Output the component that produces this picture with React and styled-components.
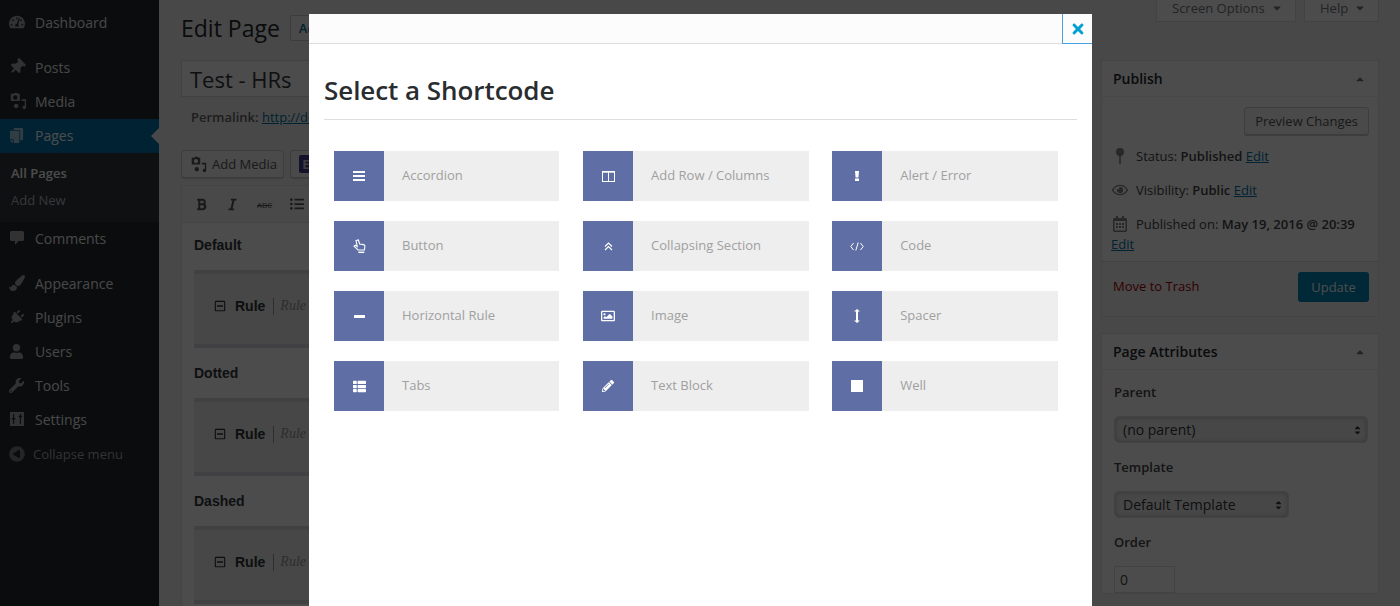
import React from 'react'
import styled, { createGlobalStyle } from 'styled-components'
import {
  FaRegImage,
  FaThList,
  FaPencilAlt,
  FaTimes,
  FaTachometerAlt,
  FaThumbtack,
  FaCopy,
  FaPaintBrush,
  FaPlug,
  FaUser,
  FaWrench,
  FaPlayCircle,
  FaBold,
  FaItalic,
  FaListUl,
  FaCaretDown,
  FaCaretUp,
  FaRegEye,
  FaRegCalendarAlt,
  FaRegMinusSquare,
} from 'react-icons/fa'

const GlobalStyle = createGlobalStyle`
  html, body {
    margin: 0;
    padding: 0;
    height: 606px;
    overflow: hidden;
    background: #f1f1f1;
  }
  * {
    box-sizing: border-box;
  }
`

const MediaGlyph = ({ size = 16 }) => (
  <svg width={size} height={size} viewBox='0 0 20 20' fill='currentColor'>
    <path d='M2 2h3l1-1h3l1 1h2v8H2V2zm5 1.5a2.5 2.5 0 1 0 0 5 2.5 2.5 0 0 0 0-5z' />
    <path d='M14 8h5v9a2 2 0 1 1-1.5-1.9V10H14V8z' />
    <path d='M8 13a2.5 2.5 0 1 1-2 4 2.5 2.5 0 0 1 2-4z' />
  </svg>
)

const CommentGlyph = () => (
  <svg width='16' height='16' viewBox='0 0 16 16' fill='currentColor'>
    <path d='M2.5 1h11A1.5 1.5 0 0 1 15 2.500v7a1.500 1.500 0 0 1-1.500 1.500H9.500L6 15v-4H2.500A1.500 1.500 0 0 1 1 9.500v-7A1.500 1.500 0 0 1 2.500 1z' />
  </svg>
)

const SettingsGlyph = () => (
  <svg width='16' height='16' viewBox='0 0 16 16'>
    <path
      fill='currentColor'
      fillRule='evenodd'
      d='M1 1h14v14H1V1zm3 2v4H2.800v1.500H4V13h1.200V8.500h1.200V7H5.200V3H4zm6.800 0v1.800H9.600v1.500h1.200V13H12V6.300h1.200V4.800H12V3h-1.200z'
    />
  </svg>
)

const PinGlyph = () => (
  <svg width='16' height='18' viewBox='0 0 16 18' fill='currentColor'>
    <circle cx='8' cy='5' r='4' />
    <rect x='7.200' y='8' width='1.600' height='9' />
  </svg>
)

const BarsGlyph = () => (
  <svg width='12' height='10' viewBox='0 0 12 10' fill='currentColor'>
    <rect width='12' height='2' />
    <rect y='4' width='12' height='2' />
    <rect y='8' width='12' height='2' />
  </svg>
)

const ColumnsGlyph = () => (
  <svg width='13' height='11' viewBox='0 0 13 11' fill='none' stroke='currentColor'>
    <rect x='0.500' y='0.500' width='12' height='10' />
    <path d='M6.500 0.500v10M0.500 1.200h12' />
  </svg>
)

const AlertGlyph = () => (
  <svg width='4' height='10' viewBox='0 0 4 10' fill='currentColor'>
    <path d='M0 0h4L3.400 6.500H0.600L0 0z' />
    <rect y='7.500' width='4' height='2.500' />
  </svg>
)

const HandGlyph = () => (
  <svg width='13' height='15' viewBox='0 0 13 15' fill='none' stroke='currentColor' strokeWidth='1.100'>
    <path d='M3 1.500L5.400 1l1.200 4 3.900.600c1 .2 1.500.9 1.400 1.900l-.500 3.500H5L1 7.200l1.500-1 1.800 1.300L3 1.500z' />
    <path d='M5.300 13.300h6' strokeWidth='1.500' />
  </svg>
)

const ChevronsGlyph = () => (
  <svg width='9' height='9' viewBox='0 0 9 9' fill='none' stroke='currentColor' strokeWidth='1.200'>
    <path d='M1 4.500l3.500-3.500L8 4.500M1 8l3.500-3.500L8 8' />
  </svg>
)

const CodeGlyph = () => (
  <svg width='14' height='9' viewBox='0 0 14 9' fill='none' stroke='currentColor'>
    <path d='M3.500 1L0.800 4.500 3.500 8M10.500 1l2.700 3.500L10.500 8M8.200 0.500L5.800 8.500' />
  </svg>
)

const MinusGlyph = () => (
  <svg width='11' height='3' viewBox='0 0 11 3' fill='currentColor'>
    <rect width='11' height='3' rx='0.500' />
  </svg>
)

const SpacerGlyph = () => (
  <svg width='6' height='14' viewBox='0 0 6 14' fill='currentColor'>
    <path d='M3 0l3 2.500H4v9h2L3 14 0 11.500h2v-9H0L3 0z' />
  </svg>
)

const SquareGlyph = () => (
  <svg width='12' height='12' viewBox='0 0 12 12' fill='currentColor'>
    <rect width='12' height='12' />
  </svg>
)

const menuTop = [
  { label: 'Posts', icon: <FaThumbtack size={16} style={{ transform: 'rotate(45deg)' }} /> },
  { label: 'Media', icon: <MediaGlyph size={18} /> },
]

const menuBottom = [
  { label: 'Appearance', icon: <FaPaintBrush size={16} /> },
  { label: 'Plugins', icon: <FaPlug size={15} style={{ transform: 'rotate(45deg)' }} /> },
  { label: 'Users', icon: <FaUser size={15} /> },
  { label: 'Tools', icon: <FaWrench size={15} /> },
  { label: 'Settings', icon: <SettingsGlyph /> },
]

const shortcodes = [
  { label: 'Accordion', icon: <BarsGlyph /> },
  { label: 'Add Row / Columns', icon: <ColumnsGlyph /> },
  { label: 'Alert / Error', icon: <AlertGlyph /> },
  { label: 'Button', icon: <HandGlyph /> },
  { label: 'Collapsing Section', icon: <ChevronsGlyph /> },
  { label: 'Code', icon: <CodeGlyph /> },
  { label: 'Horizontal Rule', icon: <MinusGlyph /> },
  { label: 'Image', icon: <FaRegImage size={14} /> },
  { label: 'Spacer', icon: <SpacerGlyph /> },
  { label: 'Tabs', icon: <FaThList size={13} /> },
  { label: 'Text Block', icon: <FaPencilAlt size={12} /> },
  { label: 'Well', icon: <SquareGlyph /> },
]

const ruleGroups = ['Default', 'Dotted', 'Dashed']

const App = () => {
  return (
    <Page>
      <GlobalStyle />
      <Sidebar>
        <MenuItem>
          <MenuIcon><FaTachometerAlt size={16} /></MenuIcon>
          Dashboard
        </MenuItem>
        <Separator />
        {menuTop.map((m) => (
          <MenuItem key={m.label}>
            <MenuIcon>{m.icon}</MenuIcon>
            {m.label}
          </MenuItem>
        ))}
        <MenuItem $active>
          <MenuIcon><FaCopy size={15} style={{ transform: 'rotate(180deg)' }} /></MenuIcon>
          Pages
        </MenuItem>
        <SubMenu>
          <SubItem $current>All Pages</SubItem>
          <SubItem>Add New</SubItem>
        </SubMenu>
        <MenuItem>
          <MenuIcon><CommentGlyph /></MenuIcon>
          Comments
        </MenuItem>
        <Separator />
        {menuBottom.map((m) => (
          <MenuItem key={m.label}>
            <MenuIcon>{m.icon}</MenuIcon>
            {m.label}
          </MenuItem>
        ))}
        <CollapseItem>
          <MenuIcon><FaPlayCircle size={16} style={{ transform: 'scaleX(-1)' }} /></MenuIcon>
          Collapse menu
        </CollapseItem>
      </Sidebar>

      <Content>
        <MainColumn>
          <HeadingRow>
            <Heading>Edit Page</Heading>
            <AddNew>Add New</AddNew>
          </HeadingRow>
          <TitleInput>Test - HRs</TitleInput>
          <Permalink>
            <strong>Permalink:</strong> <a>http://dev.example.com/test-hrs/</a>
          </Permalink>
          <MediaRow>
            <WpButton><MediaGlyph size={17} /> Add Media</WpButton>
            <WpButton><BuilderBadge>E</BuilderBadge> Editor</WpButton>
          </MediaRow>
          <Editor>
            <Toolbar>
              <FaBold size={13} />
              <FaItalic size={13} />
              <Abc>ABC</Abc>
              <FaListUl size={14} />
            </Toolbar>
            <EditorBody>
              {ruleGroups.map((g) => (
                <React.Fragment key={g}>
                  <GroupTitle>{g}</GroupTitle>
                  <RuleBlock>
                    <FaRegMinusSquare size={12} />
                    <RuleName>Rule</RuleName>
                    <RuleHint>Rule</RuleHint>
                  </RuleBlock>
                </React.Fragment>
              ))}
            </EditorBody>
          </Editor>
        </MainColumn>

        <SideColumn>
          <ScreenTabs>
            <ScreenTab $width={140}>Screen Options <FaCaretDown size={12} /></ScreenTab>
            <ScreenTab $width={75}>Help <FaCaretDown size={12} /></ScreenTab>
          </ScreenTabs>

          <Box>
            <BoxHead>Publish <FaCaretUp size={12} /></BoxHead>
            <PreviewRow>
              <WpButton>Preview Changes</WpButton>
            </PreviewRow>
            <PubRow>
              <PinGlyph />
              <span>Status: <strong>Published</strong> <a>Edit</a></span>
            </PubRow>
            <PubRow>
              <FaRegEye size={16} />
              <span>Visibility: <strong>Public</strong> <a>Edit</a></span>
            </PubRow>
            <PubRow>
              <FaRegCalendarAlt size={16} />
              <span>Published on: <strong>May 19, 2016 @ 20:39</strong></span>
            </PubRow>
            <PubDateEdit><a>Edit</a></PubDateEdit>
            <BoxFooter>
              <Trash>Move to Trash</Trash>
              <Update>Update</Update>
            </BoxFooter>
          </Box>

          <Box>
            <BoxHead>Page Attributes <FaCaretUp size={12} /></BoxHead>
            <AttrBody>
              <AttrLabel>Parent</AttrLabel>
              <FakeSelect $width={254}>(no parent)<SelectArrows><FaCaretUp size={9} /><FaCaretDown size={9} /></SelectArrows></FakeSelect>
              <AttrLabel>Template</AttrLabel>
              <FakeSelect $width={175}>Default Template<SelectArrows><FaCaretUp size={9} /><FaCaretDown size={9} /></SelectArrows></FakeSelect>
              <AttrLabel>Order</AttrLabel>
              <OrderInput>0</OrderInput>
            </AttrBody>
          </Box>
        </SideColumn>
      </Content>

      <Backdrop />

      <Modal>
        <ModalBar>
          <CloseButton><FaTimes size={16} /></CloseButton>
        </ModalBar>
        <ModalBody>
          <ModalTitle>Select a Shortcode</ModalTitle>
          <ShortcodeGrid>
            {shortcodes.map((s) => (
              <Shortcode key={s.label}>
                <ShortcodeIcon>{s.icon}</ShortcodeIcon>
                <ShortcodeLabel>{s.label}</ShortcodeLabel>
              </Shortcode>
            ))}
          </ShortcodeGrid>
        </ModalBody>
      </Modal>
    </Page>
  )
}

const Page = styled.div`
  position: relative;
  width: 1400px;
  height: 606px;
  overflow: hidden;
  display: flex;
  font-family: 'Open Sans', sans-serif;
  font-size: 13px;
  color: #444;
  background: #f1f1f1;

  a {
    color: #0073aa;
    text-decoration: underline;
  }
`

const Sidebar = styled.nav`
  width: 159px;
  flex-shrink: 0;
  background: #23282d;
  padding-top: 6px;
  color: #eee;
  font-size: 14px;
`

const MenuItem = styled.div`
  position: relative;
  height: 34px;
  padding-bottom: 2px;
  display: flex;
  align-items: center;
  color: ${(p) => (p.$active ? '#fff' : '#eee')};
  background: ${(p) => (p.$active ? '#0073aa' : 'transparent')};

  ${(p) =>
    p.$active &&
    `
    &::after {
      content: '';
      position: absolute;
      right: 0;
      top: 9px;
      border: 8px solid transparent;
      border-right-color: #f1f1f1;
    }
  `}
`

const MenuIcon = styled.span`
  width: 35px;
  padding-left: 9px;
  display: flex;
  align-items: center;
  opacity: 0.65;
`

const Separator = styled.div`
  height: 11px;
`

const SubMenu = styled.div`
  height: 69px;
  background: #32373c;
  padding-top: 6px;
`

const SubItem = styled.div`
  height: 27px;
  padding-left: 11px;
  display: flex;
  align-items: center;
  font-size: 13px;
  font-weight: ${(p) => (p.$current ? 600 : 400)};
  color: ${(p) => (p.$current ? '#fff' : 'rgba(240,245,250,.7)')};
`

const CollapseItem = styled.div`
  height: 34px;
  display: flex;
  align-items: center;
  font-size: 13px;
  color: #aaa;

  ${MenuIcon} {
    width: 33px;
  }
`

const Content = styled.div`
  flex: 1;
  display: flex;
  padding: 0 21px 0 22px;
  gap: 20px;
`

const MainColumn = styled.div`
  flex: 1;
  min-width: 0;
`

const HeadingRow = styled.div`
  height: 46px;
  padding-top: 10px;
  display: flex;
  align-items: center;
  gap: 10px;
`

const Heading = styled.h1`
  margin: 0;
  font-size: 23px;
  font-weight: 400;
  color: #23282d;
`

const AddNew = styled.span`
  padding: 3px 8px;
  border: 1px solid #ccc;
  border-radius: 2px;
  background: #f7f7f7;
  color: #0073aa;
  font-size: 13px;
  font-weight: 600;
`

const TitleInput = styled.div`
  margin-top: 14px;
  height: 37px;
  padding: 0 8px;
  display: flex;
  align-items: center;
  border: 1px solid #ddd;
  background: #fff;
  font-size: 22px;
  color: #32373c;
`

const Permalink = styled.div`
  margin-top: 11px;
  height: 18px;
  padding-left: 10px;
  line-height: 18px;
  color: #666;
  white-space: nowrap;

  strong {
    font-weight: 600;
  }
`

const MediaRow = styled.div`
  margin-top: 24px;
  height: 27px;
  display: flex;
  gap: 6px;
`

const WpButton = styled.span`
  height: 28px;
  padding: 0 6px 0 8px;
  display: inline-flex;
  align-items: center;
  gap: 5px;
  border: 1px solid #ccc;
  border-radius: 3px;
  background: #f7f7f7;
  box-shadow: 0 1px 0 #ccc;
  color: #555;
  font-size: 13px;
  white-space: nowrap;
`

const BuilderBadge = styled.span`
  width: 14px;
  height: 18px;
  display: inline-flex;
  align-items: center;
  justify-content: center;
  border-radius: 2px;
  background: #4b3a8f;
  color: #ccc;
  font-weight: 700;
`

const Editor = styled.div`
  margin-top: 8px;
  border: 1px solid #e5e5e5;
  background: #fff;
`

const Toolbar = styled.div`
  height: 37px;
  padding: 0 13px;
  display: flex;
  align-items: center;
  gap: 18px;
  border-bottom: 1px solid #e5e5e5;
  background: #f5f5f5;
  color: #555;
`

const Abc = styled.span`
  font-size: 8px;
  text-decoration: line-through;
`

const EditorBody = styled.div`
  padding: 12px 12px 0;
  font-family: 'Liberation Sans', Arial, sans-serif;
`

const GroupTitle = styled.div`
  height: 20px;
  line-height: 20px;
  font-size: 14px;
  font-weight: 700;
  color: #32373c;
  margin-bottom: 15px;
`

const RuleBlock = styled.div`
  height: 78px;
  margin-bottom: 15px;
  padding: 0 0 6px 20px;
  display: flex;
  align-items: center;
  gap: 9px;
  border-top: 4px solid #dadae0;
  border-bottom: 4px solid #dadae0;
  background: #eeeeee;
  color: #333;
`

const RuleName = styled.span`
  height: 17px;
  padding-right: 8px;
  border-right: 1px solid #999;
  font-size: 14px;
  line-height: 17px;
  font-weight: 700;
`

const RuleHint = styled.span`
  margin-left: -3px;
  font-family: 'Liberation Serif', serif;
  font-style: italic;
  font-size: 14px;
  color: #999;
`

const SideColumn = styled.div`
  width: 278px;
  flex-shrink: 0;
`

const ScreenTabs = styled.div`
  height: 60px;
  display: flex;
  justify-content: flex-end;
  gap: 8px;
  align-items: flex-start;
`

const ScreenTab = styled.div`
  width: ${(p) => p.$width}px;
  height: 22px;
  padding: 0 0 6px 15px;
  display: flex;
  align-items: center;
  gap: 8px;
  border: 1px solid #ddd;
  border-top: 0;
  background: #fff;
  color: #72777c;
  font-size: 13px;
  white-space: nowrap;

  svg {
    width: 8px;
  }
`

const Box = styled.section`
  margin-bottom: 16px;
  border: 1px solid #e5e5e5;
  background: #fff;
`

const BoxHead = styled.div`
  height: 36px;
  padding: 0 12px 0 11px;
  display: flex;
  align-items: center;
  justify-content: space-between;
  border-bottom: 1px solid #eee;
  font-size: 14px;
  font-weight: 600;
  color: #23282d;

  svg {
    color: #72777c;
  }
`

const PreviewRow = styled.div`
  height: 42px;
  padding: 10px 9px 0 0;
  display: flex;
  justify-content: flex-end;

  ${WpButton} {
    padding: 0 10px;
  }
`

const PubRow = styled.div`
  height: 34px;
  padding-left: 10px;
  display: flex;
  align-items: center;
  gap: 8px;
  white-space: nowrap;

  svg {
    width: 16px;
    color: #82878c;
  }
  strong {
    font-weight: 600;
  }
`

const PubDateEdit = styled.div`
  margin-top: -6px;
  padding: 0 0 7px 9px;
  height: 26px;
`

const BoxFooter = styled.div`
  height: 55px;
  padding: 0 9px 4px 11px;
  display: flex;
  align-items: center;
  justify-content: space-between;
  border-top: 1px solid #ddd;
  background: #f5f5f5;
`

const Trash = styled.span`
  margin-bottom: 2px;
  color: #a00;
`

const Update = styled.span`
  width: 71px;
  height: 30px;
  display: flex;
  align-items: center;
  justify-content: center;
  border-radius: 3px;
  background: #0085ba;
  color: #fff;
  font-size: 13px;
`

const AttrBody = styled.div`
  padding: 13px 12px 0;
`

const AttrLabel = styled.div`
  height: 18px;
  line-height: 18px;
  font-weight: 600;
  margin-bottom: 15px;
`

const FakeSelect = styled.div`
  width: ${(p) => p.$width}px;
  height: 27px;
  margin-bottom: 15px;
  padding: 0 8px;
  display: flex;
  align-items: center;
  justify-content: space-between;
  border: 1px solid #ddd;
  border-radius: 5px;
  background: #eee;
  box-shadow: inset 0 0 5px rgba(0, 0, 0, 0.25);
  font-size: 14px;
  color: #32373c;
`

const SelectArrows = styled.span`
  display: flex;
  flex-direction: column;
  margin-right: -3px;

  svg {
    margin: -2px 0;
  }
`

const OrderInput = styled.div`
  width: 61px;
  height: 27px;
  padding-left: 5px;
  display: flex;
  align-items: center;
  border: 1px solid #ddd;
  background: #fff;
  font-size: 14px;
`

const Backdrop = styled.div`
  position: absolute;
  inset: 0;
  background: rgba(0, 0, 0, 0.7);
`

const Modal = styled.div`
  position: absolute;
  left: 309px;
  top: 14px;
  width: 783px;
  bottom: 0;
  background: #fff;
`

const ModalBar = styled.div`
  height: 30px;
  display: flex;
  justify-content: flex-end;
  border-bottom: 1px solid #ddd;
  background: #fcfcfc;
`

const CloseButton = styled.div`
  width: 30px;
  height: 30px;
  display: flex;
  align-items: center;
  justify-content: center;
  border-left: 1px solid #4aa3df;
  border-bottom: 1px solid #4aa3df;
  color: #00a0d2;
`

const ModalBody = styled.div`
  padding: 0 15px;
`

const ModalTitle = styled.h2`
  margin: 0;
  height: 76px;
  padding-top: 28px;
  border-bottom: 1px solid #ddd;
  font-size: 26px;
  line-height: 36px;
  font-weight: 600;
  letter-spacing: -0.06px;
  color: #2a2d30;
`

const ShortcodeGrid = styled.div`
  margin-top: 31px;
  padding-left: 10px;
  display: grid;
  grid-template-columns: repeat(3, 225.45px);
  column-gap: 23.65px;
  row-gap: 20px;
`

const Shortcode = styled.div`
  height: 50px;
  display: flex;
  align-items: center;
  background: #eee;
`

const ShortcodeIcon = styled.span`
  width: 50px;
  height: 50px;
  flex-shrink: 0;
  display: flex;
  align-items: center;
  justify-content: center;
  background: #5f6fa5;
  color: #fff;
`

const ShortcodeLabel = styled.span`
  padding: 0 0 2px 18px;
  font-size: 13px;
  color: #a0a0a0;
`

export default App
